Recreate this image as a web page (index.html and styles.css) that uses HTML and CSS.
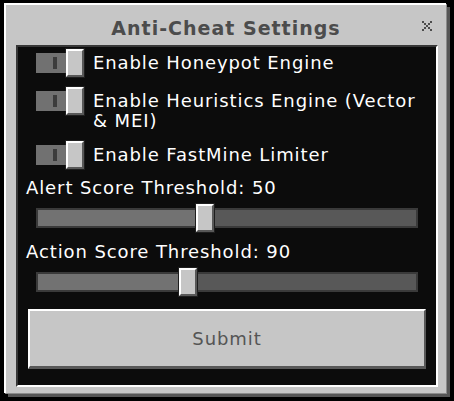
FILE: index.html
```html
<!DOCTYPE html>
<html>
<head>
<meta charset="utf-8">
<link rel="stylesheet" href="styles.css">
</head>
<body>
<div class="panel">
  <div class="header">
    <span class="spacer"></span>
    <h1 class="title">Anti-Cheat Settings</h1>
    <span class="close">
      <svg width="10" height="10" viewBox="0 0 10 10" shape-rendering="crispEdges">
        <path fill="#4c4c4c" d="M0 0h2v2H0zM2 2h2v2H2zM4 4h2v2H4zM6 6h2v2H6zM8 8h2v2H8zM8 0h2v2H8zM6 2h2v2H6zM2 6h2v2H2zM0 8h2v2H0z"/>
      </svg>
    </span>
  </div>
  <div class="content">
    <div class="toggle-row">
      <div class="toggle"><div class="track"><span class="mark"></span></div><div class="knob"></div></div>
      <div class="label">Enable Honeypot Engine</div>
    </div>
    <div class="toggle-row">
      <div class="toggle"><div class="track"><span class="mark"></span></div><div class="knob"></div></div>
      <div class="label">Enable Heuristics Engine (Vector &amp;&nbsp;MEI)</div>
    </div>
    <div class="toggle-row">
      <div class="toggle"><div class="track"><span class="mark"></span></div><div class="knob"></div></div>
      <div class="label">Enable FastMine Limiter</div>
    </div>
    <div class="field">
      <div class="field-label">Alert Score Threshold: 50</div>
      <div class="slider">
        <div class="rail"><div class="fill" style="width:162px"></div></div>
        <div class="thumb" style="left:160px"></div>
      </div>
    </div>
    <div class="field">
      <div class="field-label">Action Score Threshold: 90</div>
      <div class="slider">
        <div class="rail"><div class="fill" style="width:145px"></div></div>
        <div class="thumb" style="left:143px"></div>
      </div>
    </div>
    <button class="submit">Submit</button>
  </div>
</div>
</body>
</html>
```
FILE: styles.css
```css
html, body {
  margin: 0;
  padding: 0;
  background: #000;
}
body {
  font-family: "DejaVu Sans", sans-serif;
  width: 454px;
  height: 401px;
  overflow: hidden;
}
.panel {
  box-sizing: border-box;
  width: 442px;
  height: 390px;
  margin: 3px 0 0 4px;
  background: #c6c6c6;
  border-top: 2px solid #fff;
  border-left: 2px solid #fff;
  box-shadow: 1px 1px 0 #8b8b8b, 4px 4px 0 #555;
  padding: 0 8px 6px 10px;
  display: flex;
  flex-direction: column;
}
.header {
  height: 40px;
  display: grid;
  grid-template-columns: 1fr auto 1fr;
  margin: 0 -8px 0 -10px;
}
.title {
  margin: 0;
  padding-top: 13px;
  font-size: 19px;
  line-height: 20px;
  font-weight: bold;
  letter-spacing: 1px;
  color: #4c4c4c;
}
.close {
  justify-self: end;
  margin: 16px 14px 0 0;
  height: 10px;
  line-height: 0;
}
.content {
  box-sizing: border-box;
  flex: 1;
  background: #0c0c0c;
  border-top: 2px solid #373737;
  border-left: 2px solid #373737;
  border-right: 2px solid #fff;
  border-bottom: 2px solid #fff;
  padding-top: 2px;
  display: flex;
  flex-direction: column;
}
.toggle-row {
  display: flex;
  align-items: flex-start;
  margin-left: 18px;
  gap: 9px;
}
.toggle-row + .toggle-row {
  margin-top: 10px;
}
.toggle {
  display: flex;
  align-items: flex-start;
  flex: none;
}
.track {
  width: 30px;
  height: 20px;
  margin-top: 4px;
  background: #717171;
  position: relative;
  display: flex;
  align-items: center;
  padding-left: 17px;
  box-sizing: border-box;
}
.mark {
  width: 4px;
  height: 12px;
  background: #3c3c3c;
}
.knob, .thumb {
  box-sizing: border-box;
  width: 18px;
  height: 28px;
  background: #c6c6c6;
  border-top: 2px solid #fff;
  border-left: 2px solid #fff;
  border-right: 2px solid #585858;
  border-bottom: 2px solid #585858;
  box-shadow: 0 0 0 1px #1e1e1e;
}
.label, .field-label {
  color: #fff;
  font-size: 18px;
  line-height: 20px;
  letter-spacing: 0.9px;
}
.label {
  padding-top: 4px;
}
.field {
  display: flex;
  flex-direction: column;
  margin-top: 9px;
}
.field + .field {
  margin-top: 10px;
}
.field-label {
  padding-left: 8px;
}
.slider {
  position: relative;
  height: 28px;
  margin: 6px 18px 0 18px;
  display: flex;
  align-items: center;
}
.rail {
  box-sizing: border-box;
  flex: 1;
  height: 20px;
  background: #585858;
  border: 2px solid #3a3a3a;
  display: flex;
}
.fill {
  background: #727272;
  height: 100%;
}
.thumb {
  position: absolute;
  top: 0;
}
.submit {
  box-sizing: border-box;
  height: 60px;
  margin: 13px 10px 0 10px;
  background: #c6c6c6;
  border: none;
  border-top: 2px solid #fff;
  border-left: 2px solid #fff;
  border-right: 2px solid #585858;
  border-bottom: 3px solid #585858;
  font-family: "DejaVu Sans", sans-serif;
  font-size: 18px;
  letter-spacing: 0.9px;
  color: #555;
  padding: 0;
}
```
